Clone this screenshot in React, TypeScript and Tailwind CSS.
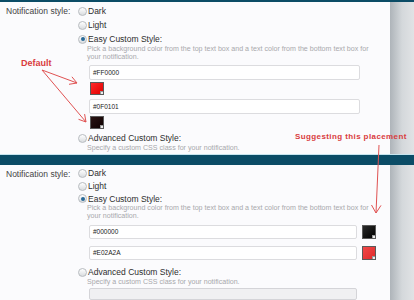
const font = { fontFamily: '"Liberation Sans", Arial, sans-serif' };

const Radio = ({ checked, label }: { checked?: boolean; label: string }) => (
  <div className="flex h-[14px] items-center">
    <span className="flex h-[9px] w-[9px] items-center justify-center rounded-full border border-[#b8bcc0] bg-gradient-to-b from-white to-[#d9dcdf]">
      {checked && <span className="h-[4px] w-[4px] rounded-full bg-[#2a6a98]" />}
    </span>
    <span className="ml-[1px] text-[8.5px] text-[#2e2e2e]">{label}</span>
  </div>
);

const Desc = ({ lines }: { lines: string[] }) => (
  <div className="-mt-px ml-[9px] text-[7.1px] leading-[8px] whitespace-nowrap text-[#a8a8ac]">
    {lines.map((l) => (
      <div key={l}>{l}</div>
    ))}
  </div>
);

const Swatch = ({ color, h = 13 }: { color: string; h?: number }) => (
  <div
    className={`relative w-[14px] border border-[#5a5a5a] ${h === 13 ? "h-[13px]" : "h-[14px]"}`}
    style={{ background: color }}
  >
    <span className="absolute bottom-0 right-0 h-[3px] w-[3px] border-l border-t border-[#999] bg-[#ececec]" />
  </div>
);

const TextBox = ({ value, className }: { value: string; className: string }) => (
  <div
    className={`flex items-center rounded-[2px] border border-[#dcdcdf] bg-white pl-[3px] text-[6.5px] text-[#222] ${className}`}
  >
    {value}
  </div>
);

const Side = () => (
  <div className="w-[24px] bg-gradient-to-r from-[#aeb4b9] via-[#d4d8db] to-[#e1e3e5]" />
);

const descText = [
  "Pick a background color from the top text box and a text color from the bottom text box for",
  "your notification.",
];

export default function App() {
  return (
    <div className="relative h-[300px] w-[414px] overflow-hidden bg-[#fbfbfd]" style={font}>
      <div className="h-[2px] bg-[#0b4c66]" />

      {/* first screenshot: default placement */}
      <div className="flex h-[152px]">
        <div className="flex w-[390px] pt-[2px]">
          <div className="w-[78px] pl-[6px]">
            <div className="flex h-[14px] items-center text-[8.5px] text-[#444]">Notification style:</div>
          </div>
          <div className="flex flex-1 flex-col">
            <Radio label="Dark" />
            <Radio label="Light" />
            <Radio checked label="Easy Custom Style:" />
            <Desc lines={descText} />
            <TextBox value="#FF0000" className="ml-[11px] mt-[4px] h-[15px] w-[271px]" />
            <div className="ml-[12px] mt-[2px]">
              <Swatch color="linear-gradient(135deg,#ff2a2a,#e00000)" />
            </div>
            <TextBox value="#0F0101" className="ml-[11px] mt-[4px] h-[15px] w-[271px]" />
            <div className="ml-[12px] mt-[2px]">
              <Swatch color="linear-gradient(135deg,#2a1414,#0f0101)" />
            </div>
            <div className="mt-[2px]">
              <Radio label="Advanced Custom Style:" />
            </div>
            <Desc lines={["Specify a custom CSS class for your notification."]} />
          </div>
        </div>
        <Side />
      </div>

      <div className="h-px bg-[#c6e5ef]" />
      <div className="h-[10px] bg-[#0b4c66]" />

      {/* second screenshot: suggested placement */}
      <div className="flex h-[135px]">
        <div className="flex w-[390px] pt-[2px]">
          <div className="w-[78px] pl-[6px]">
            <div className="flex h-[14px] items-center text-[8.5px] text-[#444]">Notification style:</div>
          </div>
          <div className="flex flex-1 flex-col">
            <Radio label="Dark" />
            <Radio label="Light" />
            <Radio checked label="Easy Custom Style:" />
            <Desc lines={descText} />
            <div className="ml-[11px] mt-[5px] flex items-center gap-[5px]">
              <TextBox value="#000000" className="h-[14px] w-[268px]" />
              <Swatch color="linear-gradient(135deg,#2a2a2a,#000)" h={14} />
            </div>
            <div className="ml-[11px] mt-[7px] flex items-center gap-[5px]">
              <TextBox value="#E02A2A" className="h-[14px] w-[268px]" />
              <Swatch color="linear-gradient(135deg,#f04848,#e02a2a)" h={14} />
            </div>
            <div className="mt-[5px]">
              <Radio label="Advanced Custom Style:" />
            </div>
            <Desc lines={["Specify a custom CSS class for your notification."]} />
            <div className="ml-[11px] mt-[2px] h-[14px] w-[268px] rounded-[2px] border border-[#d4d4d8] bg-[#f0f0f2]" />
          </div>
        </div>
        <Side />
      </div>

      {/* annotations */}
      <div className="absolute left-[21px] top-[57px] text-[9px] font-bold text-[#d93b3d]">Default</div>
      <div className="absolute left-[295px] top-[131px] text-[8px] font-bold tracking-[0.4px] text-[#d93b3d]">
        Suggesting this placement
      </div>
      <svg className="pointer-events-none absolute inset-0" width="414" height="300" fill="none" stroke="#e05252" strokeWidth="1">
        <path d="M42 70 L77 83 M69 84.3 L77 83 L71.9 76.8" />
        <path d="M42 70 L86 122 M78.5 119.3 L86 122 L84.6 114.1" />
        <path d="M379 145 L376 213 M371.5 205 L376 213 L381 205.4" />
      </svg>
    </div>
  );
}
